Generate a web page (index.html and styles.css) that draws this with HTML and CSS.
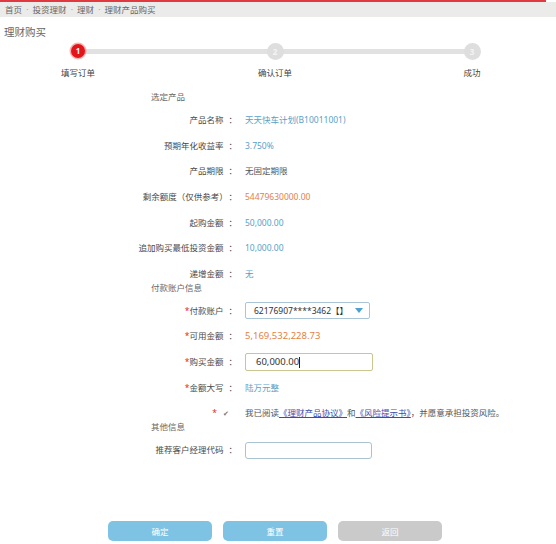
FILE: index.html
```html
<!DOCTYPE html>
<html lang="zh-CN">
<head>
<meta charset="utf-8">
<title>理财购买</title>
<link rel="stylesheet" href="styles.css">
</head>
<body>
<div class="topline"></div>
<nav class="crumbs"><span>首页</span><i>·</i><span>投资理财</span><i>·</i><span>理财</span><i>·</i><span>理财产品购买</span></nav>
<h1 class="title">理财购买</h1>

<div class="steps">
  <div class="track"></div>
  <div class="step active"><div class="dot-box"><span class="dot">1</span></div><span class="step-label">填写订单</span></div>
  <div class="step"><div class="dot-box"><span class="dot">2</span></div><span class="step-label">确认订单</span></div>
  <div class="step"><div class="dot-box"><span class="dot">3</span></div><span class="step-label">成功</span></div>
</div>

<form class="form">
  <div class="group-title first">选定产品</div>
  <div class="row"><span class="key">产品名称</span><span class="val blue">天天快车计划(B10011001)</span></div>
  <div class="row"><span class="key">预期年化收益率</span><span class="val blue">3.750%</span></div>
  <div class="row"><span class="key">产品期限</span><span class="val">无固定期限</span></div>
  <div class="row"><span class="key">剩余额度（仅供参考）</span><span class="val orange">54479630000.00</span></div>
  <div class="row"><span class="key">起购金额</span><span class="val blue">50,000.00</span></div>
  <div class="row"><span class="key">追加购买最低投资金额</span><span class="val blue">10,000.00</span></div>
  <div class="row"><span class="key">递增金额</span><span class="val blue">无</span></div>

  <div class="group-title">付款账户信息</div>
  <div class="row"><span class="key"><b class="req">*</b>付款账户</span>
    <div class="select"><span>62176907****3462【】</span><i class="caret-down"></i></div></div>
  <div class="row"><span class="key"><b class="req">*</b>可用金额</span><span class="val orange big">5,169,532,228.73</span></div>
  <div class="row"><span class="key"><b class="req">*</b>购买金额</span>
    <div class="input focus"><span>60,000.00</span><i class="text-caret"></i></div></div>
  <div class="row"><span class="key"><b class="req">*</b>金额大写</span><span class="val blue">陆万元整</span></div>
  <div class="row"><span class="key nocolon"><b class="req">*</b><span class="check">✔</span></span>
    <span class="val">我已阅读<a class="link">《理财产品协议》</a>和<a class="link">《风险提示书》</a>，并愿意承担投资风险。</span></div>

  <div class="group-title">其他信息</div>
  <div class="row"><span class="key">推荐客户经理代码</span><div class="input"></div></div>

  <div class="actions">
    <button type="button" class="btn">确定</button>
    <button type="button" class="btn">重置</button>
    <button type="button" class="btn off">返回</button>
  </div>
</form>
</body>
</html>
```
FILE: styles.css
```css
* { box-sizing: border-box; }

body {
  margin: 0;
  width: 556px;
  background: #fff;
  color: #555;
  font-family: "Noto Sans", "Noto Sans CJK SC", sans-serif;
  font-size: 8.5px;
}

/* header strip + breadcrumb */
.topline {
  height: 2px;
  width: 546px;
  background: #e03a40;
}
.crumbs {
  height: 15px;
  line-height: 15px;
  padding-left: 5px;
  background: #ebebea;
  color: #666;
}
.crumbs i {
  display: inline-block;
  width: 10.5px;
  text-align: center;
  font-style: normal;
  color: #aaa;
}
.title {
  margin: 0;
  padding: 9px 0 0 4px;
  font-size: 10.5px;
  line-height: 12px;
  font-weight: normal;
  color: #666;
}

/* progress steps */
.steps {
  position: relative;
  display: flex;
  gap: 137px;
  padding-left: 48px;
  height: 41px;
}
.track {
  position: absolute;
  left: 78px;
  width: 394px;
  top: 10.5px;
  height: 5px;
  border-radius: 3px;
  background: #e1e1e1;
}
.step {
  position: relative;
  width: 60px;
  display: flex;
  flex-direction: column;
  align-items: center;
}
.dot-box {
  height: 26px;
  display: flex;
  align-items: center;
  justify-content: center;
}
.dot {
  width: 17px;
  height: 17px;
  border-radius: 50%;
  background: #dedede;
  color: #f4f4f4;
  font-size: 8px;
  line-height: 17px;
  text-align: center;
  font-weight: bold;
}
.step.active .dot {
  width: 14px;
  height: 14px;
  line-height: 14px;
  background: #e3151b;
  color: #fff;
  box-shadow: 0 0 0 1.5px rgba(225, 40, 40, 0.35);
}
.step-label {
  margin-top: 3px;
  line-height: 12px;
  color: #444;
}

/* form */
.form {
  display: flex;
  flex-direction: column;
  margin: 0;
}
.group-title {
  height: 10px;
  line-height: 10px;
  padding-left: 151px;
  color: #666;
}
.group-title.first { margin-top: 13.3px; }
.group-title + .row { margin-top: 9px; }
.row + .row { margin-top: 7.6px; }

.row {
  display: grid;
  grid-template-columns: 237px 1fr;
  column-gap: 8px;
  align-items: center;
  height: 18px;
  line-height: 12px;
}
.key {
  text-align: right;
  color: #4a4a4a;
  white-space: nowrap;
}
.key::after {
  content: "：";
  margin-left: 5px;
}
.key.nocolon::after { content: none; }
.key.nocolon { padding-right: 8px; }
.req {
  color: #e0242a;
  font-weight: normal;
}
.check {
  margin-left: 6px;
  color: #777;
  font-size: 7px;
}
.val {
  white-space: nowrap;
  color: #555;
}
.blue { color: #5a9fc8; }
.orange { color: #e5813f; }
.big { font-size: 9.5px; }
.link {
  color: #3b4bb0;
  text-decoration: underline;
}

.select {
  width: 125px;
  height: 17px;
  padding: 0 6px 0 8px;
  border: 1px solid #aac5d6;
  border-radius: 2px;
  display: flex;
  align-items: center;
  justify-content: space-between;
  color: #333;
}
.caret-down {
  width: 0;
  height: 0;
  border-left: 4px solid transparent;
  border-right: 4px solid transparent;
  border-top: 5px solid #4aa2d2;
}
.input {
  width: 127px;
  height: 17px;
  border: 1px solid #aac3d1;
  border-radius: 3px;
  display: flex;
  align-items: center;
  padding-left: 10px;
}
.input.focus {
  width: 128px;
  height: 18px;
  border: 1.5px solid #cbc58f;
  border-radius: 2px;
  font-size: 9.5px;
  color: #333;
}
.text-caret {
  width: 1px;
  height: 11px;
  background: #222;
}

/* buttons */
.actions {
  display: flex;
  gap: 11px;
  padding-left: 108px;
  margin-top: 61.7px;
}
.btn {
  width: 104px;
  height: 20px;
  border: 0;
  border-radius: 5px;
  background: #7ec3e3;
  color: #fff;
  font: inherit;
  padding: 0;
}
.btn.off { background: #cacaca; }
```
